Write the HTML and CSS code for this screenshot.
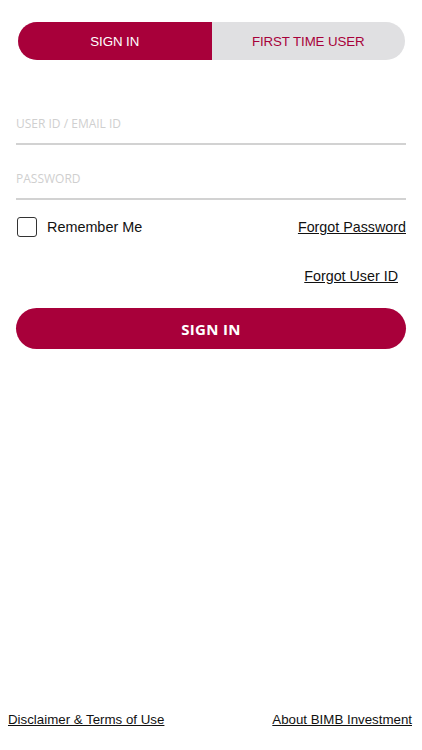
FILE: index.html
```html
<!DOCTYPE html>
<html lang="en">
<head>
    <meta charset="UTF-8">
    <meta name="viewport" content="width=device-width, initial-scale=1.0">
    <title>Sign In</title>
    <link rel="stylesheet" href="styles.css">
</head>
<body>
    <div class="page">
        <div class="tabs">
            <button class="tab tab-active">SIGN IN</button>
            <button class="tab">FIRST TIME USER</button>
        </div>

        <form class="login-form" onsubmit="return false">
            <div class="field field-first"><input type="text" placeholder="USER ID / EMAIL ID"></div>
            <div class="field field-second"><input type="password" placeholder="PASSWORD"></div>

            <div class="options-row">
                <label class="remember"><span class="checkbox"></span>Remember Me</label>
                <a href="#" class="link">Forgot Password</a>
            </div>
            <div class="forgot-id-row">
                <a href="#" class="link">Forgot User ID</a>
            </div>

            <button class="signin-btn">SIGN IN</button>
        </form>

        <div class="footer">
            <a href="#" class="link footer-link">Disclaimer &amp; Terms of Use</a>
            <a href="#" class="link footer-link">About BIMB Investment</a>
        </div>
    </div>
</body>
</html>
```

FILE: styles.css
```css
* { box-sizing: border-box; margin: 0; padding: 0; }
body { background: #fff; font-family: "Liberation Sans", Arial, sans-serif; color: #111; }
.page { display: flex; flex-direction: column; min-height: 100vh; padding: 0 16px; }

.tabs { display: flex; height: 38px; margin: 22px 1px 0 2px; border-radius: 19px; overflow: hidden; background: #e0e0e2; }
.tab { flex: 1; border: none; background: transparent; color: #a8003a; font-family: "Liberation Sans", Arial, sans-serif; font-size: 13.3px; letter-spacing: -0.1px; }
.tab-active { background: #a8003a; color: #fff; }

.field { height: 42px; border-bottom: 2px solid #d2d2d2; }
.field-first { margin-top: 43px; }
.field-second { margin-top: 13px; }
.field input { width: 100%; height: 40px; border: none; outline: none; background: transparent; font-family: "Open Sans", sans-serif; font-size: 12px; color: #333; }
.field input::placeholder { color: #cfcfcf; }

.options-row { display: flex; justify-content: space-between; align-items: center; margin-top: 17px; height: 20px; }
.remember { display: flex; align-items: center; font-size: 14.4px; }
.checkbox { width: 20px; height: 20px; margin: 0 10px 0 1px; border: 1.5px solid #333; border-radius: 3px; }
.link { color: #111; font-size: 14.3px; text-decoration: underline; }

.forgot-id-row { display: flex; justify-content: flex-end; margin-top: 31px; padding-right: 8px; }

.signin-btn { width: 100%; height: 41px; margin-top: 24px; border: none; border-radius: 21px; background: #a8003a; color: #fff; font-family: "Open Sans", sans-serif; font-weight: 700; font-size: 15px; letter-spacing: 0.3px; }

.footer { display: flex; justify-content: space-between; margin: auto -6px 0 -8px; padding-bottom: 23px; }
.footer-link { font-size: 13.3px; }
```
